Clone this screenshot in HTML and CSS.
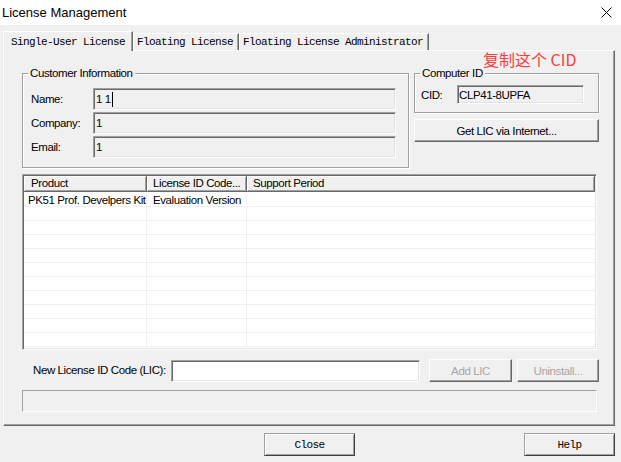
FILE: index.html
```html
<!DOCTYPE html>
<html>
<head>
<meta charset="utf-8">
<title>License Management</title>
<link rel="stylesheet" href="styles.css">
</head>
<body>
<div class="titlebar">
  <span class="title">License Management</span>
  <svg class="close-x" width="11" height="11" viewBox="0 0 11 11"><path d="M0.5 0.5 L10.5 10.5 M10.5 0.5 L0.5 10.5" stroke="#000" stroke-width="1" fill="none"/></svg>
</div>
<div class="tabs">
  <div class="tab active">Single-User License</div>
  <div class="tab">Floating License</div>
  <div class="tab">Floating License Administrator</div>
</div>
<div class="panel">
  <div class="note">复制这个 CID</div>
  <div class="top-row">
    <div class="group customer">
      <div class="group-title">Customer Information</div>
      <div class="fields">
        <span class="lbl">Name:</span><div class="field">1 1<span class="caret"></span></div>
        <span class="lbl">Company:</span><div class="field">1</div>
        <span class="lbl">Email:</span><div class="field">1</div>
      </div>
    </div>
    <div class="right-col">
      <div class="group computer">
        <div class="group-title">Computer ID</div>
        <div class="cid-row"><span class="cid-lbl">CID:</span><div class="field cid">CLP41-8UPFA</div></div>
      </div>
      <button class="btn get-lic">Get LIC via Internet...</button>
    </div>
  </div>
  <div class="listview">
    <div class="lv-head"><div class="first">Product</div><div>License ID Code...</div><div>Support Period</div></div>
    <div class="lv-body">
      <div class="lv-row"><div class="first">PK51 Prof. Develpers Kit</div><div>Evaluation Version</div><div></div></div>
      <div class="lv-row"><div class="first"></div><div></div><div></div></div>
      <div class="lv-row"><div class="first"></div><div></div><div></div></div>
      <div class="lv-row"><div class="first"></div><div></div><div></div></div>
      <div class="lv-row"><div class="first"></div><div></div><div></div></div>
      <div class="lv-row"><div class="first"></div><div></div><div></div></div>
      <div class="lv-row"><div class="first"></div><div></div><div></div></div>
      <div class="lv-row"><div class="first"></div><div></div><div></div></div>
      <div class="lv-row"><div class="first"></div><div></div><div></div></div>
      <div class="lv-row"><div class="first"></div><div></div><div></div></div>
      <div class="lv-row"><div class="first"></div><div></div><div></div></div>
    </div>
  </div>
  <div class="lic-row">
    <span class="lic-lbl">New License ID Code (LIC):</span>
    <div class="field lic-input"></div>
    <button class="btn disabled add-lic">Add LIC</button>
    <button class="btn disabled uninstall">Uninstall...</button>
  </div>
  <div class="status"></div>
</div>
<div class="footer">
  <button class="btn dlg">Close</button>
  <button class="btn dlg">Help</button>
</div>
</body>
</html>
```
FILE: styles.css
```css
html, body {
  margin: 0;
  padding: 0;
}
body {
  width: 621px;
  height: 462px;
  overflow: hidden;
  background: #f0f0f0;
  font-family: "Liberation Sans", Arial, sans-serif;
  font-size: 11.5px;
  letter-spacing: -0.4px;
  color: #000;
}

.titlebar {
  height: 25px;
  background: #fff;
  display: flex;
  align-items: center;
  justify-content: space-between;
  padding: 0 9px 0 2px;
}
.title {
  font-size: 13px;
  letter-spacing: 0;
}
.close-x {
  display: block;
}

.tabs {
  display: flex;
  align-items: flex-end;
  margin: 6px 0 0 3px;
  font-family: "Liberation Mono", "DejaVu Sans Mono", monospace;
  font-size: 11px;
  letter-spacing: -0.6px;
}
.tab {
  background: #f0f0f0;
  border-top: 1px solid #fff;
  border-left: 1px solid #fff;
  border-right: 1px solid #696969;
  box-shadow: inset -1px 0 #a0a0a0;
  line-height: 15px;
  padding: 1px 5px 0 3px;
  white-space: nowrap;
}
.tab.active {
  padding: 3px 7px 1px 7px;
  margin-bottom: -1px;
  position: relative;
  z-index: 1;
}

.panel {
  position: relative;
  margin-left: 3px;
  width: 612px;
  height: 376px;
  box-sizing: border-box;
  border-top: 1px solid #fff;
  border-left: 1px solid #fff;
  border-right: 1px solid #696969;
  border-bottom: 1px solid #696969;
  box-shadow: inset -1px -1px #a0a0a0;
  padding: 22px 0 0 18px;
}
.note {
  position: absolute;
  left: 479px;
  top: -1px;
  font-family: "Noto Sans CJK SC", "Liberation Sans", sans-serif;
  font-size: 16px;
  line-height: 19px;
  letter-spacing: 0;
  color: #ff3c3c;
}

.top-row {
  display: flex;
  align-items: flex-start;
  gap: 5px;
}
.group {
  box-sizing: border-box;
  border: 1px solid #a0a0a0;
  box-shadow: inset 1px 1px #fff, 1px 1px #fff;
}
.group-title {
  width: fit-content;
  margin: -8px 0 0 5px;
  padding: 0 2px;
  line-height: 14px;
  background: #f0f0f0;
  white-space: nowrap;
}
.customer {
  width: 387px;
  height: 95px;
}
.fields {
  display: grid;
  grid-template-columns: 62px 303px;
  grid-auto-rows: 22px;
  row-gap: 2px;
  margin: 8px 0 0 8px;
}
.lbl {
  align-self: center;
}
.field {
  box-sizing: border-box;
  height: 22px;
  border: 1px solid;
  border-color: #a0a0a0 #fff #fff #a0a0a0;
  box-shadow: inset 1px 1px #696969, inset -1px -1px #e3e3e3;
  padding: 0 2px;
  display: flex;
  align-items: center;
  white-space: nowrap;
}
.caret {
  display: inline-block;
  width: 1px;
  height: 15px;
  margin-left: 1px;
  background: #000;
}

.right-col {
  width: 185px;
  display: flex;
  flex-direction: column;
  gap: 6px;
}
.computer {
  width: 185px;
  height: 40px;
}
.cid-row {
  display: flex;
  align-items: center;
  margin: 5px 0 0 6px;
}
.cid-lbl {
  width: 36px;
}
.field.cid {
  width: 127px;
  height: 19px;
  padding-left: 1px;
}

.btn {
  box-sizing: border-box;
  height: 23px;
  margin: 0;
  padding: 0;
  font: inherit;
  letter-spacing: inherit;
  color: #000;
  background: #f0f0f0;
  border: 1px solid;
  border-color: #fff #696969 #696969 #fff;
  box-shadow: inset -1px -1px #a0a0a0;
  white-space: nowrap;
}
.btn.get-lic {
  width: 185px;
}
.btn.disabled {
  color: #a6a6a6;
}

.listview {
  margin-top: 6px;
  width: 575px;
  height: 176px;
  box-sizing: border-box;
  border: 1px solid;
  border-color: #a0a0a0 #fff #fff #a0a0a0;
  box-shadow: inset 1px 1px #696969, inset -1px -1px #e3e3e3;
  background: #fff;
  padding: 1px;
  overflow: hidden;
}
.lv-head {
  display: grid;
  grid-template-columns: 123px 100px 1fr;
  height: 16px;
}
.lv-head div {
  box-sizing: border-box;
  background: #f0f0f0;
  border-right: 1px solid #696969;
  border-bottom: 1px solid #696969;
  box-shadow: inset 1px 1px #fff, inset -1px -1px #a0a0a0;
  padding-left: 6px;
  line-height: 15px;
  white-space: nowrap;
  overflow: hidden;
}
.lv-head div.first {
  padding-left: 7px;
}
.lv-body {
  padding-top: 1px;
}
.lv-row {
  display: grid;
  grid-template-columns: 123px 100px 1fr;
  height: 14px;
  box-sizing: border-box;
  border-bottom: 1px solid #f0f0f0;
}
.lv-row div {
  border-right: 1px solid #f0f0f0;
  padding-left: 6px;
  line-height: 14px;
  white-space: nowrap;
  overflow: hidden;
}
.lv-row div.first {
  padding-left: 4px;
}
.lv-row div:last-child {
  border-right: none;
}

.lic-row {
  display: flex;
  align-items: flex-start;
  margin-top: 9px;
}
.lic-lbl {
  width: 138px;
  margin-left: 11px;
  line-height: 22px;
  white-space: nowrap;
}
.field.lic-input {
  width: 249px;
  margin-top: 1px;
  background: #fff;
}
.btn.add-lic {
  width: 83px;
  margin-left: 9px;
}
.btn.uninstall {
  width: 82px;
  margin-left: 5px;
}
.status {
  margin-top: 8px;
  width: 575px;
  height: 22px;
  box-sizing: border-box;
  border: 1px solid;
  border-color: #a0a0a0 #fff #fff #a0a0a0;
}

.footer {
  display: flex;
  gap: 169px;
  padding-left: 264px;
  margin-top: 7px;
}
.btn.dlg {
  width: 91px;
  height: 23px;
  font-family: "Liberation Mono", "DejaVu Sans Mono", monospace;
  font-size: 11px;
  letter-spacing: -0.6px;
  border-color: #a0a0a0 #404040 #404040 #a0a0a0;
  box-shadow: inset 1px 1px #fff, inset -1px -1px #a0a0a0;
}
```
